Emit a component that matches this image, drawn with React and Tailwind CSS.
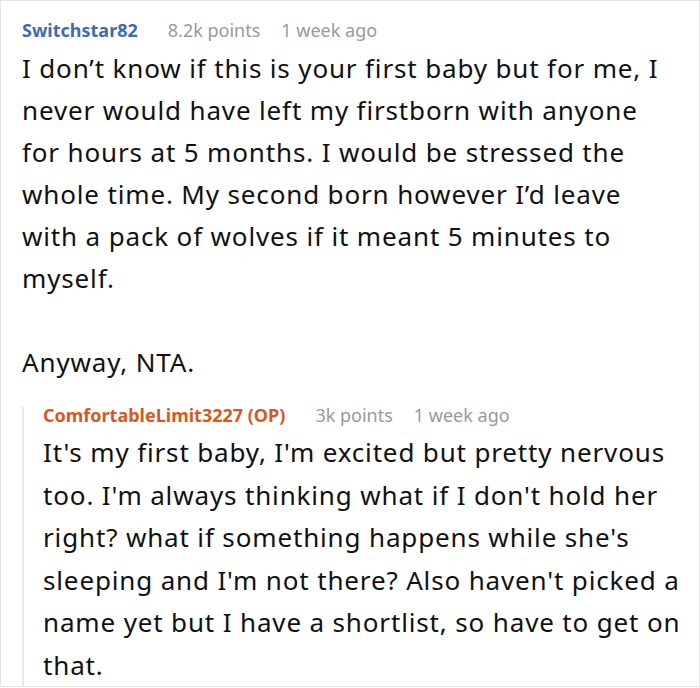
export default function App() {
  const font = { fontFamily: '"Noto Sans", "Open Sans", sans-serif' };

  return (
    <div className="w-[700px] h-[687px] bg-white border border-[#e3e3e3] pl-[21px] pr-2 pt-[17px] text-[#111]" style={font}>
      {/* Top comment */}
      <div className="flex items-center text-[18px] leading-[24px]">
        <span className="font-bold text-[#3c6cb6]">Switchstar82</span>
        <span className="ml-[30px] text-[#999]">8.2k points</span>
        <span className="ml-[21px] text-[#999]">1 week ago</span>
      </div>
      <p className="mt-[5px] text-[26px] leading-[42px] whitespace-nowrap tracking-[0.85px]">
        I don’t know if this is your first baby but for me, I<br />
        never would have left my firstborn with anyone<br />
        for hours at 5 months. I would be stressed the<br />
        whole time. My second born however I’d leave<br />
        with a pack of wolves if it meant 5 minutes to<br />
        myself.
      </p>
      <p className="mt-[42px] text-[26px] leading-[42px] tracking-[0.85px]">Anyway, NTA.</p>

      {/* Reply */}
      <div className="mt-[24px] border-l-2 border-[#e8e8e8] pl-[19px]">
        <div className="flex items-center text-[18px] leading-[16px]">
          <span className="font-bold text-[#d8581f]">ComfortableLimit3227 (OP)</span>
          <span className="ml-[30px] text-[#999]">3k points</span>
          <span className="ml-[21px] text-[#999]">1 week ago</span>
        </div>
        <p className="mt-[8px] text-[26px] leading-[42.5px] whitespace-nowrap tracking-[0.85px]">
          It's my first baby, I'm excited but pretty nervous<br />
          too. I'm always thinking what if I don't hold her<br />
          right? what if something happens while she's<br />
          sleeping and I'm not there? Also haven't picked a<br />
          name yet but I have a shortlist, so have to get on<br />
          that.
        </p>
      </div>
    </div>
  );
}
